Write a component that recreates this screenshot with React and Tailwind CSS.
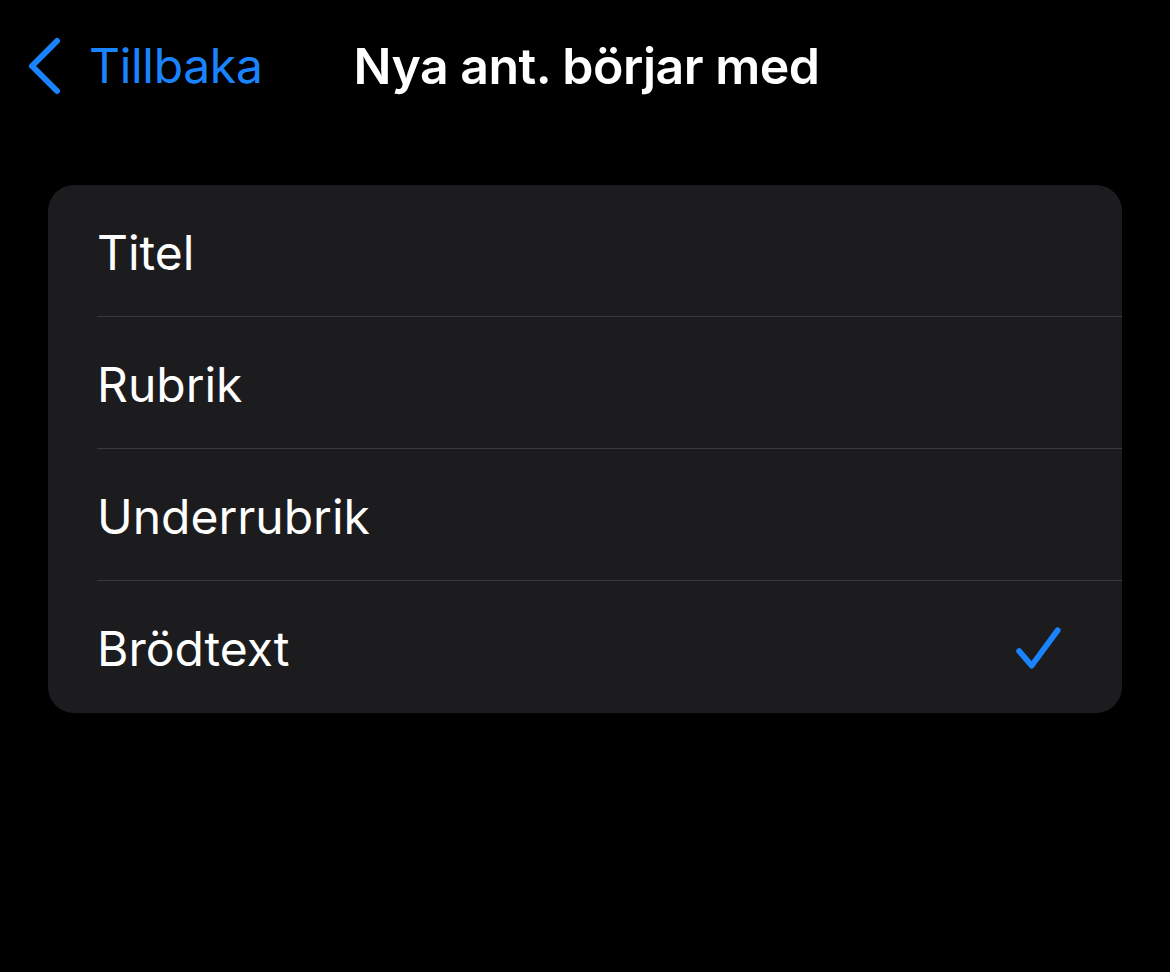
import React from 'react';

const rader = ['Titel', 'Rubrik', 'Underrubrik', 'Brödtext'];

export default function App() {
  const vald = 'Brödtext';
  return (
    <div className="w-[1170px] h-[972px] bg-black text-white" style={{ fontFamily: 'Inter, "Noto Sans", sans-serif' }}>
      <div className="relative h-[130px] flex items-start">
        <button className="flex items-center mt-[37px] ml-[26px] text-[#1a84ff]">
          <svg width="36" height="58" viewBox="0 0 36 58" fill="none">
            <path d="M31 4 L6 29 L31 54" stroke="#1a84ff" strokeWidth="6" strokeLinecap="round" strokeLinejoin="round" />
          </svg>
          <span className="ml-[27px] text-[48px] leading-none tracking-[-0.3px]">Tillbaka</span>
        </button>
        <div className="ml-[91px] mt-[41px] text-[50px] leading-none font-semibold tracking-[-0.5px]">Nya ant. börjar med</div>
      </div>

      <div className="mx-[48px] mt-[55px] rounded-[26px] bg-[#1c1c1e] overflow-hidden">
        {rader.map((r, i) => (
          <div key={r} className="pl-[97px] -ml-[48px]">
            <div className="h-[131px] flex items-center pr-[60px] pt-[4px]">
              <span className="text-[48px] flex-1">{r}</span>
              {r === vald && (
                <svg width="50" height="50" viewBox="0 0 48 48" fill="none" className="mr-[-3px] mt-[2px]">
                  <path d="M4 25 L16 39 L41 5" stroke="#1a84ff" strokeWidth="5.5" strokeLinecap="round" strokeLinejoin="round" />
                </svg>
              )}
            </div>
            {i < rader.length - 1 && <div className="h-px bg-[#3a3a3c]" />}
          </div>
        ))}
        <div className="h-px" />
      </div>
    </div>
  );
}
